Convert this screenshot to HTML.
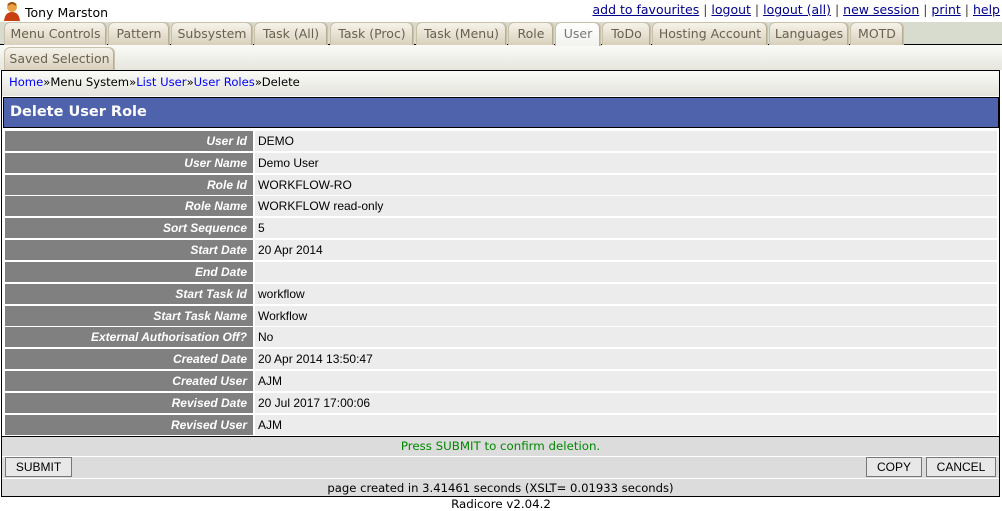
<!DOCTYPE html>
<html><head><meta charset="utf-8"><style>
*{margin:0;padding:0;box-sizing:border-box}
body{width:1002px;height:511px;background:#fff;font-family:"DejaVu Sans","Liberation Sans",sans-serif;position:relative;overflow:hidden;font-size:12px}
.a{position:absolute}
.tab{position:absolute;height:23px;border:1px solid #c8c0a8;border-bottom:none;border-radius:6px 6px 0 0;background:linear-gradient(#f6f3ea,#d8d0bc);color:#6a6050;font-size:12.5px;line-height:22px;text-align:center;box-shadow:inset -1px 0 #b8ad90}
.tab.sel{background:linear-gradient(#fff,#f2f2ee);color:#777}
.lnk a{color:#00008b;text-decoration:underline}
.row{position:absolute;left:5px;width:992px;height:20px}
.row .l{position:absolute;left:0;width:248px;height:20px;background:#808080;color:#fff;font:italic bold 12px "Liberation Sans",Arial,sans-serif;text-align:right;padding-right:6px;line-height:20px}
.row .v{position:absolute;left:250px;right:0;height:20px;background:#ececec;font:12px "Liberation Sans",Arial,sans-serif;line-height:20px;padding-left:3px}
.btn{position:absolute;height:20px;border:1px solid #777;background:#e8e8e8;font:12px "Liberation Sans",Arial,sans-serif;line-height:18px;text-align:center}
</style></head><body>
<svg class="a" style="left:3px;top:1px" width="18" height="20" viewBox="0 0 18 20"><circle cx="9" cy="6" r="5" fill="#e8a040"/><path d="M1 20 Q2 11 9 11 Q16 11 17 20Z" fill="#c84010"/><path d="M5 4 Q9 0 13 4" stroke="#a05010" fill="none" stroke-width="2"/></svg>
<div class="a" style="left:25px;top:5px;font-size:12.5px">Tony Marston</div>
<div class="a lnk" style="right:2px;top:2px;font-size:12.5px;color:#444;white-space:nowrap"><a>add to favourites</a> | <a>logout</a> | <a>logout (all)</a> | <a>new session</a> | <a>print</a> | <a>help</a></div>
<div class="a" style="left:0;top:22px;width:1002px;height:23px;background:#d8dccf"></div>
<div class="a" style="left:0;top:45px;width:1002px;height:25px;background:linear-gradient(#fafaf7,#e6e6df)"></div>
<div class="a" style="left:0;top:44px;width:1002px;height:1px;background:#000"></div>
<div class="tab" style="left:4px;top:22px;width:103px">Menu Controls</div>
<div class="tab" style="left:108px;top:22px;width:62px">Pattern</div>
<div class="tab" style="left:171px;top:22px;width:82px">Subsystem</div>
<div class="tab" style="left:254px;top:22px;width:74px">Task (All)</div>
<div class="tab" style="left:330px;top:22px;width:84px">Task (Proc)</div>
<div class="tab" style="left:416px;top:22px;width:91px">Task (Menu)</div>
<div class="tab" style="left:508px;top:22px;width:46px">Role</div>
<div class="tab sel" style="left:555px;top:22px;width:46px;height:24px">User</div>
<div class="tab" style="left:602px;top:22px;width:49px">ToDo</div>
<div class="tab" style="left:652px;top:22px;width:116px">Hosting Account</div>
<div class="tab" style="left:769px;top:22px;width:80px">Languages</div>
<div class="tab" style="left:850px;top:22px;width:54px">MOTD</div>
<div class="tab" style="left:4px;top:47px;width:111px">Saved Selection</div>
<div class="a" style="left:1px;top:70px;width:999px;height:427px;border:1px solid #000;background:#fff"></div>
<div class="a" style="left:2px;top:71px;width:997px;height:25px;background:linear-gradient(#fafaf7,#e4e4dc)"></div>
<div class="a" style="left:9px;top:75px;font-size:11.6px"><span style="color:#00f">Home</span>»Menu System»<span style="color:#00f">List User</span>»<span style="color:#00f">User Roles</span>»Delete</div>
<div class="a" style="left:3px;top:97px;width:996px;height:31px;background:#4f63ad;border:1px solid #000;color:#fff;font-weight:bold;font-size:14.5px;line-height:29px;padding-left:6px">Delete User Role</div>
<div class="row" style="top:131px"><div class="l">User Id</div><div class="v">DEMO</div></div>
<div class="row" style="top:153px"><div class="l">User Name</div><div class="v">Demo User</div></div>
<div class="row" style="top:175px"><div class="l">Role Id</div><div class="v">WORKFLOW-RO</div></div>
<div class="row" style="top:196px"><div class="l">Role Name</div><div class="v">WORKFLOW read-only</div></div>
<div class="row" style="top:218px"><div class="l">Sort Sequence</div><div class="v">5</div></div>
<div class="row" style="top:240px"><div class="l">Start Date</div><div class="v">20 Apr 2014</div></div>
<div class="row" style="top:262px"><div class="l">End Date</div><div class="v"></div></div>
<div class="row" style="top:284px"><div class="l">Start Task Id</div><div class="v">workflow</div></div>
<div class="row" style="top:306px"><div class="l">Start Task Name</div><div class="v">Workflow</div></div>
<div class="row" style="top:327px"><div class="l">External Authorisation Off?</div><div class="v">No</div></div>
<div class="row" style="top:349px"><div class="l">Created Date</div><div class="v">20 Apr 2014 13:50:47</div></div>
<div class="row" style="top:371px"><div class="l">Created User</div><div class="v">AJM</div></div>
<div class="row" style="top:393px"><div class="l">Revised Date</div><div class="v">20 Jul 2017 17:00:06</div></div>
<div class="row" style="top:415px"><div class="l">Revised User</div><div class="v">AJM</div></div>
<div class="a" style="left:2px;top:436px;width:997px;height:1px;background:#000"></div>
<div class="a" style="left:2px;top:437px;width:997px;height:59px;background:#dcdcdc"></div>
<div class="a" style="left:2px;top:456px;width:997px;height:1px;background:#fff"></div>
<div class="a" style="left:2px;top:478px;width:997px;height:1px;background:#fff"></div>
<div class="a" style="left:2px;top:439px;width:997px;text-align:center;color:#080;font-size:11.8px">Press SUBMIT to confirm deletion.</div>
<div class="btn" style="left:5px;top:457px;width:67px">SUBMIT</div>
<div class="btn" style="left:866px;top:457px;width:56px">COPY</div>
<div class="btn" style="left:926px;top:457px;width:70px">CANCEL</div>
<div class="a" style="left:2px;top:481px;width:997px;text-align:center;font-size:11.6px">page created in 3.41461 seconds (XSLT= 0.01933 seconds)</div>
<div class="a" style="left:0;top:497px;width:1002px;text-align:center;font-size:11.8px">Radicore v2.04.2</div>
</body></html>
